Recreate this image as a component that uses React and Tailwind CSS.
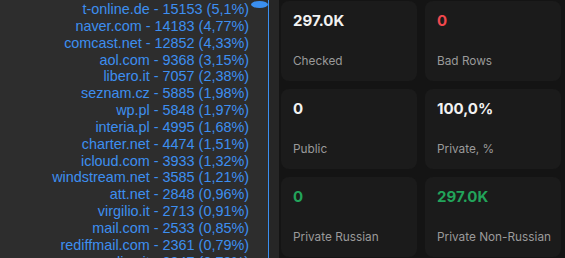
const domains = [
  ['t-online.de', 15153, '5,1'],
  ['naver.com', 14183, '4,77'],
  ['comcast.net', 12852, '4,33'],
  ['aol.com', 9368, '3,15'],
  ['libero.it', 7057, '2,38'],
  ['seznam.cz', 5885, '1,98'],
  ['wp.pl', 5848, '1,97'],
  ['interia.pl', 4995, '1,68'],
  ['charter.net', 4474, '1,51'],
  ['icloud.com', 3933, '1,32'],
  ['windstream.net', 3585, '1,21'],
  ['att.net', 2848, '0,96'],
  ['virgilio.it', 2713, '0,91'],
  ['mail.com', 2533, '0,85'],
  ['rediffmail.com', 2361, '0,79'],
  ['alice.it', 2347, '0,79'],
];

const stats = [
  { value: '297.0K', label: 'Checked', color: 'text-[#f2f2f2]' },
  { value: '0', label: 'Bad Rows', color: 'text-[#f0484e]' },
  { value: '0', label: 'Public', color: 'text-[#f2f2f2]' },
  { value: '100,0%', label: 'Private, %', color: 'text-[#f2f2f2]' },
  { value: '0', label: 'Private Russian', color: 'text-[#22a35a]' },
  { value: '297.0K', label: 'Private Non-Russian', color: 'text-[#22a35a]' },
];

function StatCard({ value, label, color }) {
  return (
    <div className="flex h-[80px] flex-col justify-between rounded-[8px] bg-[#1b1b1b] px-3 pb-[13px] pt-[11px]">
      <div className={'text-[15px] font-bold leading-[18px] ' + color}>{value}</div>
      <div className="whitespace-nowrap text-[11.8px] leading-[14px] text-[#9a9a9a]">{label}</div>
    </div>
  );
}

export default function App() {
  return (
    <div className="flex h-[258px] w-[565px] overflow-hidden bg-[#141414]" style={{ fontFamily: 'Inter, "Noto Sans", sans-serif' }}>
      {/* domain list */}
      <div className="relative w-[269px] shrink-0 overflow-hidden border-r border-[#3a8ff0] bg-[#2d2d2d]">
        <div className="absolute right-0 top-[1px] h-[7px] w-[17px] rounded-[50%] bg-[#3a8ff0]" />
        <div
          className="flex flex-col items-end pr-[19px] pt-[1px] text-[14.4px] leading-[16.85px] text-[#3d8ff0]"
          style={{ fontFamily: '"Liberation Sans", Arial, sans-serif' }}
        >
          {domains.map(([d, n, p]) => (
            <div key={d} className="whitespace-nowrap">
              {d} - {n} ({p}%)
            </div>
          ))}
        </div>
      </div>
      <div className="w-[10px] shrink-0 bg-[#262626]" />
      {/* stat cards */}
      <div className="grid flex-1 grid-cols-2 content-start gap-2 pl-[2px] pr-[4px] pt-[1px]">
        {stats.map((s, i) => (
          <StatCard key={i} {...s} />
        ))}
      </div>
    </div>
  );
}
